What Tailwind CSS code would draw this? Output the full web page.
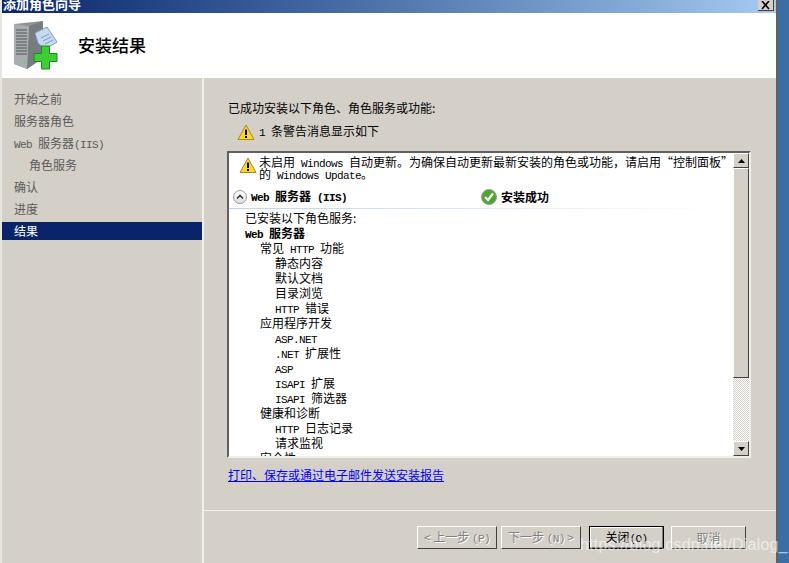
<!DOCTYPE html>
<html lang="zh-CN">
<head>
  <meta charset="UTF-8" />
  <title>添加角色向导</title>
  <script src="https://cdn.jsdelivr.net/npm/@tailwindcss/browser@4"></script>
</head>
<body class="bg-[#3a6ea5] h-[563px] w-[789px] overflow-hidden relative font-['Noto_Sans_CJK_SC',sans-serif] text-[12px] leading-[15px] text-black">

  <div class="w-[778px] h-[563px] flex flex-col border-l-2 border-l-[#e8e6e0] border-r-2 border-r-[#606060] bg-[#d4d0c8]">

    <!-- title bar -->
    <div class="h-[13px] shrink-0 flex justify-between bg-gradient-to-r from-[#0a246a] to-[#a6caf0] overflow-hidden">
      <div class="text-white font-bold text-[13px] leading-[13px] -mt-[3px] pl-[1px]">添加角色向导</div>
      <div class="w-[16px] h-[11px] mr-[2px] bg-[#d4d0c8] border-r border-b border-r-[#404040] border-b-[#404040] flex items-end justify-center">
        <svg width="10" height="9" viewBox="0 0 10 9"><path d="M1 0L8 8M8 0L1 8" stroke="#000" stroke-width="1.6" fill="none"/></svg>
      </div>
    </div>

    <!-- header -->
    <div class="h-[65px] shrink-0 bg-white flex items-center pl-[10px]">
      <svg width="46" height="50" viewBox="0 0 46 50" class="-mt-[2px]">
        <path d="M2 4L31 1V38L15 49L2 44Z" fill="#8d9296"/>
        <path d="M17 6L31 1V38L15 49Z" fill="#777c80"/>
        <path d="M2 4L17 6L15 49L2 44Z" fill="#a9adb0"/>
        <path d="M4 10H15M4 13H15M4 16H15M4 19H15M4 22H15M4 25H15M4 28H15M4 31H15M4 34H15" stroke="#50545a" stroke-width="1"/>
        <rect x="11" y="42" width="2" height="2" fill="#6fdc3c"/>
        <path d="M23 13L35 7L45 22L33 29L26 23Z" fill="#c5d9f1" stroke="#7a9cc0"/>
        <path d="M29 18L37 14M31 21L39 17M33 24L41 20" stroke="#7a9cc0"/>
        <path d="M29.5 26H37.5V33.5H45V41.5H37.5V49H29.5V41.5H22V33.5H29.5Z" fill="#3ccf34" stroke="#1c8a1c"/>
      </svg>
      <div class="ml-[20px] -mt-[1px] text-[17px] leading-[20px] font-medium">安装结果</div>
    </div>

    <div class="flex-1 flex min-h-0">
      <!-- left nav -->
      <div class="w-[200px] shrink-0 pt-[12px] flex flex-col gap-[4px] text-[#5a5a5a]">
        <div class="h-[18px] leading-[18px] pl-[12px]">开始之前</div>
        <div class="h-[18px] leading-[18px] pl-[12px]">服务器角色</div>
        <div class="h-[18px] leading-[18px] pl-[12px]"><span class="font-['Liberation_Mono'] text-[11px] tracking-[-0.6px]">Web </span>服务器<span class="font-['Liberation_Mono'] text-[11px] tracking-[-0.6px]">(IIS)</span></div>
        <div class="h-[18px] leading-[18px] pl-[27px]">角色服务</div>
        <div class="h-[18px] leading-[18px] pl-[12px]">确认</div>
        <div class="h-[18px] leading-[18px] pl-[12px]">进度</div>
        <div class="h-[18px] leading-[18px] pl-[12px] bg-[#0a246a] text-white">结果</div>
      </div>
      <div class="w-[2px] shrink-0 bg-[#f1efe9]"></div>

      <!-- main -->
      <div class="flex-1 flex flex-col">
        <div class="flex-1 pl-[24px] pt-[22px]">
          <div class="leading-[16px]">已成功安装以下角色、角色服务或功能:</div>
          <div class="flex items-center mt-[7px] ml-[9px] h-[18px]">
            <svg width="18" height="17" viewBox="0 0 18 17"><path d="M9 1L17 15.5H1Z" fill="#fbd72e" stroke="#a98a1c" stroke-linejoin="round"/><path d="M9 5.5V11" stroke="#000" stroke-width="2"/><rect x="8" y="12" width="2" height="2"/></svg>
            <div class="ml-[4px]"><span class="font-['Liberation_Mono'] text-[11px] tracking-[-0.6px]">1 </span>条警告消息显示如下</div>
          </div>

          <div class="mt-[10px] -ml-[1px] w-[524px] h-[307px] flex border-2 border-t-[#606060] border-l-[#606060] border-r-[#f1efe9] border-b-[#f1efe9] bg-white">
            <div class="flex-1 min-w-0 overflow-hidden">
              <div class="flex pt-[4px] pl-[10px]">
                <svg width="18" height="17" viewBox="0 0 18 17" class="shrink-0"><path d="M9 1L17 15.5H1Z" fill="#fbd72e" stroke="#a98a1c" stroke-linejoin="round"/><path d="M9 5.5V11" stroke="#000" stroke-width="2"/><rect x="8" y="12" width="2" height="2"/></svg>
                <div class="ml-[2px] -mt-[1px]">
                  <div class="h-[12px] leading-[12px] whitespace-nowrap">未启用<span class="font-['Liberation_Mono'] text-[11px] tracking-[-0.6px]"> Windows </span>自动更新。为确保自动更新最新安装的角色或功能，请启用“控制面板”</div>
                  <div class="h-[12px] leading-[12px] whitespace-nowrap">的<span class="font-['Liberation_Mono'] text-[11px] tracking-[-0.6px]"> Windows Update</span>。</div>
                </div>
              </div>
              <div class="flex items-center h-[22px] mt-[6px] pl-[4px] font-bold">
                <div class="w-[14px] h-[14px] rounded-full border border-[#9a9a9a] bg-gradient-to-b from-white to-[#dcdcdc] flex items-center justify-center">
                  <svg width="8" height="6" viewBox="0 0 8 6"><path d="M1 4.5L4 1.5L7 4.5" stroke="#222" stroke-width="1.4" fill="none"/></svg>
                </div>
                <div class="w-[230px] ml-[4px] -mt-[1px]"><span class="font-['Liberation_Mono'] text-[11px] tracking-[-0.6px]">Web </span>服务器<span class="font-['Liberation_Mono'] text-[11px] tracking-[-0.6px]"> (IIS)</span></div>
                <svg width="16" height="16" viewBox="0 0 16 16"><circle cx="8" cy="8" r="7.5" fill="#4aa82e" stroke="#9a9a9a"/><path d="M4 8L7 11L12 4.5" stroke="#fff" stroke-width="2.2" fill="none"/></svg>
                <div class="ml-[4px] -mt-[1px]">安装成功</div>
              </div>
              <div class="h-[1px] w-[490px] bg-gradient-to-r from-[#bcd3ee] to-white"></div>
              <div class="pt-[1px] pl-[16px]">
                <div class="h-[15px]">已安装以下角色服务:</div>
                <div class="h-[15px] font-bold"><span class="font-['Liberation_Mono'] text-[11px] tracking-[-0.6px]">Web </span>服务器</div>
                <div class="h-[15px] pl-[15px]">常见<span class="font-['Liberation_Mono'] text-[11px] tracking-[-0.6px]"> HTTP </span>功能</div>
                <div class="h-[15px] pl-[30px]">静态内容</div>
                <div class="h-[15px] pl-[30px]">默认文档</div>
                <div class="h-[15px] pl-[30px]">目录浏览</div>
                <div class="h-[15px] pl-[30px]"><span class="font-['Liberation_Mono'] text-[11px] tracking-[-0.6px]">HTTP </span>错误</div>
                <div class="h-[15px] pl-[15px]">应用程序开发</div>
                <div class="h-[15px] pl-[30px]"><span class="font-['Liberation_Mono'] text-[11px] tracking-[-0.6px]">ASP.NET</span></div>
                <div class="h-[15px] pl-[30px]"><span class="font-['Liberation_Mono'] text-[11px] tracking-[-0.6px]">.NET </span>扩展性</div>
                <div class="h-[15px] pl-[30px]"><span class="font-['Liberation_Mono'] text-[11px] tracking-[-0.6px]">ASP</span></div>
                <div class="h-[15px] pl-[30px]"><span class="font-['Liberation_Mono'] text-[11px] tracking-[-0.6px]">ISAPI </span>扩展</div>
                <div class="h-[15px] pl-[30px]"><span class="font-['Liberation_Mono'] text-[11px] tracking-[-0.6px]">ISAPI </span>筛选器</div>
                <div class="h-[15px] pl-[15px]">健康和诊断</div>
                <div class="h-[15px] pl-[30px]"><span class="font-['Liberation_Mono'] text-[11px] tracking-[-0.6px]">HTTP </span>日志记录</div>
                <div class="h-[15px] pl-[30px]">请求监视</div>
                <div class="h-[15px] pl-[15px]">安全性</div>
              </div>
            </div>

            <!-- scrollbar -->
            <div class="w-[16px] shrink-0 flex flex-col bg-[repeating-conic-gradient(#ffffff_0_25%,#d4d0c8_0_50%)] bg-[length:2px_2px]">
              <div class="h-[15px] bg-[#d4d0c8] border-t border-l border-white border-r border-r-[#404040] border-b border-b-[#404040] flex items-center justify-center">
                <svg width="7" height="4" viewBox="0 0 7 4"><path d="M3.5 0L7 4H0Z"/></svg>
              </div>
              <div class="h-[210px] bg-[#d4d0c8] border-t border-l border-white border-r border-r-[#404040] border-b border-b-[#404040]"></div>
              <div class="flex-1"></div>
              <div class="h-[15px] bg-[#d4d0c8] border-t border-l border-white border-r border-r-[#404040] border-b border-b-[#404040] flex items-center justify-center">
                <svg width="7" height="4" viewBox="0 0 7 4"><path d="M0 0H7L3.5 4Z"/></svg>
              </div>
            </div>
          </div>

          <a class="block mt-[9px] text-[#0000ff] underline leading-[15px]">打印、保存或通过电子邮件发送安装报告</a>
        </div>

        <!-- footer -->
        <div class="h-[53px] shrink-0 border-t border-t-[#f1efe9] flex pt-[15px] pl-[213px]">
          <button class="w-[80px] h-[23px] bg-[#d4d0c8] border-t border-l border-white border-r border-b border-r-[#404040] border-b-[#404040] text-[#808080] [text-shadow:1px_1px_0_#fff]">&lt; 上一步 <span class="font-['Liberation_Mono'] text-[11px] tracking-[-0.6px]">(P)</span></button>
          <button class="ml-[4px] w-[80px] h-[23px] bg-[#d4d0c8] border-t border-l border-white border-r border-b border-r-[#404040] border-b-[#404040] text-[#808080] [text-shadow:1px_1px_0_#fff]">下一步 <span class="font-['Liberation_Mono'] text-[11px] tracking-[-0.6px]">(N)</span> &gt;</button>
          <button class="ml-[8px] w-[75px] h-[23px] bg-[#d4d0c8] border border-black shadow-[inset_-1px_-1px_0_#808080,inset_1px_1px_0_#fff]">关闭<span class="font-['Liberation_Mono'] text-[11px] tracking-[-0.6px]">(O)</span></button>
          <button class="ml-[7px] w-[75px] h-[23px] bg-[#d4d0c8] border-t border-l border-white border-r border-b border-r-[#404040] border-b-[#404040] text-[#808080] [text-shadow:1px_1px_0_#fff]">取消</button>
        </div>
      </div>
    </div>
  </div>

  <!-- watermark -->
  <div class="absolute left-[580px] top-[535px] text-[16px] leading-[20px] text-white/60 font-['Liberation_Sans',sans-serif] tracking-[0.2px]">https://blog.csdn.net/Dialog_</div>
</body>
</html>
